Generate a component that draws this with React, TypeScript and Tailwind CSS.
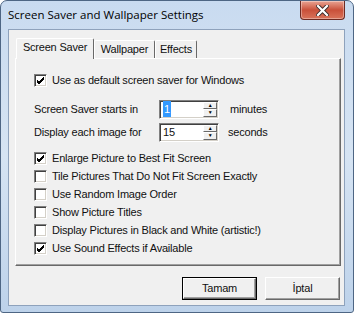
import React from 'react';

const font = { fontFamily: '"Liberation Sans", Arial, sans-serif' };

const Check: React.FC<{ checked?: boolean }> = ({ checked }) => (
  <span className="w-[13px] h-[13px] shrink-0 bg-white border border-t-[#808080] border-l-[#808080] border-r-white border-b-white shadow-[inset_1px_1px_0_#404040,inset_-1px_-1px_0_#d4d0c8] flex items-center justify-center">
    {checked && (
      <svg width="9" height="9" viewBox="0 0 9 9">
        <path d="M1 4 L3 6 L8 1 M1 5 L3 7 L8 2 M1 6 L3 8 L8 3" stroke="#000" strokeWidth="1" fill="none" />
      </svg>
    )}
  </span>
);

const CheckRow: React.FC<{ checked?: boolean; label: string }> = ({ checked, label }) => (
  <div className="flex items-center h-[18px] gap-[5px]">
    <Check checked={checked} />
    <span>{label}</span>
  </div>
);

const Spin: React.FC<{ value: string; selected?: boolean }> = ({ value, selected }) => (
  <div className="w-[60px] h-[19px] bg-white flex border border-t-[#808080] border-l-[#808080] border-r-white border-b-white shadow-[inset_1px_1px_0_#404040,inset_-1px_-1px_0_#d4d0c8]">
    <div className="flex-1 flex items-center pl-[3px]">
      <span className={selected ? 'bg-[#3399ff] text-white px-[1px]' : ''}>{value}</span>
    </div>
    <div className="w-[15px] flex flex-col p-[1px] pl-0">
      {['▲', '▼'].map((a) => (
        <div
          key={a}
          className="flex-1 bg-[#f0f0f0] border border-t-white border-l-white border-r-[#696969] border-b-[#696969] flex items-center justify-center text-[5px] leading-none text-black"
        >
          {a}
        </div>
      ))}
    </div>
  </div>
);

const Btn: React.FC<{ label: string; def?: boolean }> = ({ label, def }) => (
  <div className={`w-[75px] h-[23px] ${def ? 'border border-[#000]' : ''}`}>
    <div className="w-full h-full bg-[#f0f0f0] border border-t-white border-l-white border-r-[#696969] border-b-[#696969] shadow-[inset_-1px_-1px_0_#a0a0a0] flex items-center justify-center">
      {label}
    </div>
  </div>
);

export default function App() {
  return (
    <div className="w-[354px] h-[313px] overflow-hidden bg-white">
      <div className="w-[354px] h-[313px] rounded-t-[7px] rounded-b-[3px] border border-[#4e6684] bg-gradient-to-b from-[#c9dbf0] via-[#d6e4f3] to-[#bdd2ea] flex flex-col relative">
        <div className="h-[28px] flex items-center pl-[7px] text-[11.5px] text-black" style={{ fontFamily: '"Open Sans", "Noto Sans", sans-serif' }}>
          Screen Saver and Wallpaper Settings
        </div>
        <div className="absolute right-[8px] top-0 w-[45px] h-[19px] rounded-b-[4px] border border-t-0 border-[#6d2a22] bg-gradient-to-b from-[#e8a393] via-[#c9503a] to-[#d9735a] flex items-center justify-center shadow-[inset_0_0_0_1px_rgba(255,255,255,0.35)]">
          <svg width="13" height="11" viewBox="0 0 13 11">
            <path d="M2 1 L11 10 M11 1 L2 10" stroke="#3a2a2a" strokeWidth="4" strokeLinecap="square" />
            <path d="M2 1 L11 10 M11 1 L2 10" stroke="#fff" strokeWidth="2.2" strokeLinecap="square" />
          </svg>
        </div>
        <div
          className="ml-[7px] mr-[8px] h-[277px] bg-[#f0f0f0] border border-[#8ea2bc] flex flex-col text-[11px] tracking-[-0.2px] text-[#111]"
          style={font}
        >
          <div className="flex items-end h-[28px] pl-[7px]">
            <div className="w-[78px] h-[21px] bg-[#f0f0f0] border-t border-l border-white border-r border-r-[#696969] rounded-t-[2px] flex items-center justify-center relative z-10 -mb-[1px] pb-[3px]">
              Screen Saver
            </div>
            <div className="w-[61px] h-[18px] border-t border-l border-white border-r border-r-[#696969] rounded-t-[2px] flex items-center justify-center">
              Wallpaper
            </div>
            <div className="w-[42px] h-[18px] border-t border-l border-white border-r border-r-[#696969] rounded-t-[2px] flex items-center justify-center">
              Effects
            </div>
          </div>
          <div className="ml-[6px] w-[326px] h-[208px] border border-t-white border-l-white border-r-[#696969] border-b-[#696969] shadow-[inset_-1px_-1px_0_#a0a0a0] flex flex-col pl-[18px] pt-[12px]">
            <CheckRow checked label="Use as default screen saver for Windows" />
            <div className="flex items-center mt-[10px] h-[20px]">
              <span className="w-[125px]">Screen Saver starts in</span>
              <Spin value="1" selected />
              <span className="ml-[11px]">minutes</span>
            </div>
            <div className="flex items-center mt-[3px] h-[20px]">
              <span className="w-[125px]">Display each image for</span>
              <Spin value="15" />
              <span className="ml-[9px]">seconds</span>
            </div>
            <div className="flex flex-col mt-[7px]">
              <CheckRow checked label="Enlarge Picture to Best Fit Screen" />
              <CheckRow label="Tile Pictures That Do Not Fit Screen Exactly" />
              <CheckRow label="Use Random Image Order" />
              <CheckRow label="Show Picture Titles" />
              <CheckRow label="Display Pictures in Black and White (artistic!)" />
              <CheckRow checked label="Use Sound Effects if Available" />
            </div>
          </div>
          <div className="flex justify-end gap-[8px] mt-[11px] pr-[4px]">
            <Btn label="Tamam" def />
            <Btn label="İptal" />
          </div>
        </div>
      </div>
    </div>
  );
}
